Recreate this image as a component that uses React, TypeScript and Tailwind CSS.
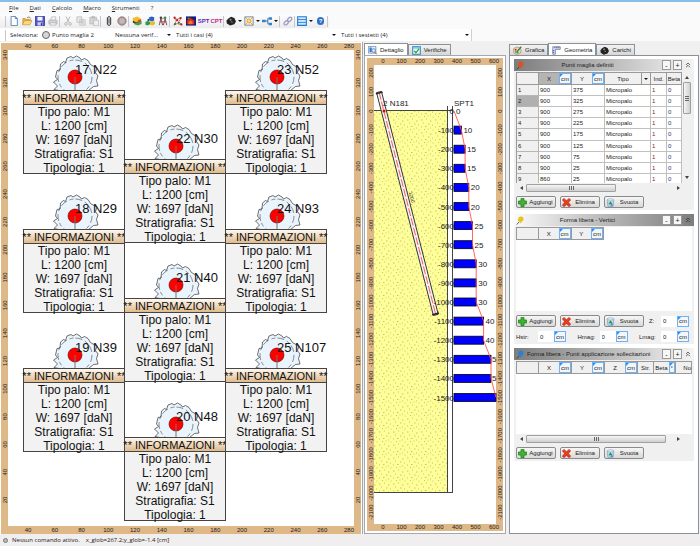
import { useState, type ReactNode } from "react";
import clsx from "clsx";
import { ChevronsUp } from "lucide-react";

type Pile = { label: string; x: number; y: number };

// x, y: top left corner of the information box
const PILES: Pile[] = [
  { label: "17 N22", x: 24, y: 91 },
  { label: "18 N29", x: 24, y: 230 },
  { label: "19 N39", x: 24, y: 369 },
  { label: "22 N30", x: 125, y: 160 },
  { label: "21 N40", x: 125, y: 299 },
  { label: "20 N48", x: 125, y: 438 },
  { label: "23 N52", x: 226, y: 91 },
  { label: "24 N93", x: 226, y: 230 },
  { label: "25 N107", x: 226, y: 369 },
];

const PILE_INFO = ["Tipo palo: M1", "L: 1200 [cm]", "W: 1697 [daN]", "Stratigrafia: S1", "Tipologia: 1"];

const SPT = [0, 10, 15, 15, 20, 20, 25, 25, 30, 30, 30, 40, 40, 50, 50, 60];

const POINTS = [
  [900, 375],
  [900, 325],
  [900, 275],
  [900, 225],
  [900, 175],
  [900, 125],
  [900, 75],
  [900, 25],
  [860, 25],
];

const MENU = ["File", "Dati", "Calcolo", "Macro", "Strumenti", "?"];

const BLOB =
  "M-14 14 L-21 12.5 L-17.5 9 L-21.5 5 L-17.5 2.5 L-19.5 0 L-18 -6.5 L-15 -7 L-14.5 -13 L-11.5 -15.5 L-9.5 -14.5 L-8 -19 L-4 -20.5 L-2 -19 L1.5 -21 L5 -19 L6.5 -17 L9.5 -18.5 L13 -16.5 L15.5 -12.5 L18 -11 L22 -9 L20.5 -4.5 L23 -1 L21.5 3.5 L23 9 L18.5 9.5 L13 14 Z";

function range(from: number, to: number, step: number) {
  const out: number[] = [];
  for (let v = from; step > 0 ? v <= to : v >= to; v += step) out.push(v);
  return out;
}

function Svg({ children, className = "size-[10px]" }: { children: ReactNode; className?: string }) {
  return (
    <svg viewBox="0 0 12 12" className={clsx("shrink-0", className)} aria-hidden="true">
      {children}
    </svg>
  );
}

const icons = {
  nuovo: <path d="M2.5 .5h5l2.5 2.5v8.500h-7.500zM7.500 .5v2.500h2.500" fill="#fff" stroke="#4a77a8" />,
  apri: (
    <>
      <path d="M1 10V3h3l1 1h5v2" fill="#e9b44c" stroke="#b07b1c" strokeWidth=".6" />
      <path d="M0.500 10.500L3 5.500h9l-2.500 5z" fill="#ffd978" stroke="#b07b1c" strokeWidth=".6" />
      <path d="M6 2q3-2.500 4.500 1" fill="none" stroke="#555" strokeWidth=".8" />
    </>
  ),
  salva: (
    <>
      <path d="M.500 .500h11v11h-11z" fill="#5558c8" stroke="#2f3296" />
      <path d="M3 1h6v4.500H3z" fill="#f4f6ff" />
      <path d="M3 7.500h6v4H3z" fill="#c9cdf3" />
      <path d="M7 8.500h1.500v3H7z" fill="#2f3296" />
    </>
  ),
  stampa: (
    <>
      <path d="M3 5l1.500-4h5L9 5z" fill="#f4f4f4" stroke="#aaa" strokeWidth=".7" />
      <path d="M1 5h10v4.500H1z" fill="#d4d4d4" stroke="#aaa" strokeWidth=".7" />
      <path d="M2.500 8h7v3h-7z" fill="#eee" stroke="#aaa" strokeWidth=".7" />
    </>
  ),
  taglia: (
    <g fill="none" stroke="#b0b0b0">
      <path d="M3.500 .500L7.500 8M8.500 .500L4.500 8" />
      <circle cx="3.500" cy="9.500" r="1.600" />
      <circle cx="8.500" cy="9.500" r="1.600" />
    </g>
  ),
  copia: (
    <g fill="#e8e8e8" stroke="#b5b5b5" strokeWidth=".8">
      <path d="M1 1h6v6.500H1zM4.500 4.500h6.500v6.500H4.500z" />
      <path d="M6 6.500h3.500M6 8.500h3.500" />
    </g>
  ),
  incolla: (
    <g fill="#d5d5d5" stroke="#b0b0b0" strokeWidth=".8">
      <path d="M1 1.500h8v8H1zM3.500 .500h3v2h-3z" />
      <path d="M5.500 5h6v6.500h-6z" fill="#f0f0f0" />
    </g>
  ),
  palo: (
    <>
      <path d="M4 2q2-3 4 0v8q-2 3-4 0z" fill="#d8d8d8" stroke="#222" strokeWidth="1.100" />
      <path d="M6 3v6" stroke="#444" />
    </>
  ),
  sezione: (
    <>
      <circle cx="6" cy="6" r="5" fill="#aaa" stroke="#777" />
      <circle cx="6" cy="6" r="3.900" fill="#bbb" stroke="#d25050" strokeDasharray="1.500 1.200" />
    </>
  ),
  strati: (
    <>
      <path d="M1 2.500l5-2 4 2v3l-5 2-4-2z" fill="#f4bd2a" />
      <path d="M1 5.500l4 2 5-2v2.500l-5 2-4-2z" fill="#5c3c25" />
      <path d="M5 8l6.500-2v3.500L7 11.500 2 9.500z" fill="#3fa546" />
      <path d="M7 5l4-1.500v3L7 8z" fill="#d84c2c" />
    </>
  ),
  cubi: (
    <>
      <path d="M5 1.500l3-1 3 1v4l-3 1-3-1z" fill="#2d61c9" />
      <path d="M.500 7l3-1 2.500 1v3l-3 1.500-2.500-1z" fill="#2f9b46" />
      <path d="M6 7l3-1 3 1v3l-3 1.500-3-1z" fill="#e3c228" />
      <path d="M3 4l2-1v3H3z" fill="#184b9e" />
    </>
  ),
  verifica: (
    <>
      <path d="M1.500 11L3.500 3l2 8M6.500 11l2-8 2 8" fill="none" stroke="#333" strokeWidth=".9" />
      <path d="M2 7h8" stroke="#d22" />
      <circle cx="3.500" cy="2" r="1.500" fill="#444" />
      <circle cx="8.500" cy="2" r="1.500" fill="#2a8c4a" />
      <path d="M5 4l2-2M5 10h2" stroke="#c22" />
    </>
  ),
  nodi: (
    <>
      <path d="M1 2l4 2 5-2-3 5 4 4-6-2-4 2 3-5z" fill="none" stroke="#a33" strokeWidth=".8" />
      <g fill="#c31c1c">
        <circle cx="2" cy="2" r="1.300" />
        <circle cx="9" cy="2.500" r="1.300" />
        <circle cx="5" cy="5" r="1.300" />
        <circle cx="10" cy="10" r="1.300" />
      </g>
      <g fill="#2d7a2d">
        <circle cx="2.500" cy="9.500" r="1.200" />
        <circle cx="7" cy="8" r="1.200" />
      </g>
    </>
  ),
  mappa: (
    <>
      <path d="M0 .500h12v11H0z" fill="#141b7c" />
      <path d="M1 10V5l4-3 5 3v5z" fill="#d3281e" />
      <path d="M3 10V7l3-2 2 2v3z" fill="#f5761f" />
      <path d="M2 2h2v1.500H2z" fill="#37c23c" />
    </>
  ),
  carico: (
    <>
      <path d="M3 3l3-2 4 1.500 2 4-2 3.500-5 1.500L1 9 .500 5.500z" fill="#222" />
      <path d="M4 4l2-1 1 2-2 1z" fill="#888" />
      <path d="M6 7l2 .500" stroke="#999" />
    </>
  ),
  maglia: (
    <>
      <path d="M1 1h10v10H1z" fill="#fff4cf" stroke="#315fb8" strokeWidth=".8" />
      <circle cx="6" cy="6" r="2.500" fill="#ffd98a" stroke="#d38310" strokeWidth=".8" />
      <path d="M1 1l3 3M11 1L8 4M1 11l3-3M11 11L8 8" stroke="#e09a20" />
    </>
  ),
  albero: (
    <>
      <path d="M4 6h3M7 3v6.500M7 3h1M7 9.500h1" stroke="#357" fill="none" />
      <path d="M0 4.500h4.500v3H0zM8 1.500h4v3H8zM8 8h4v3H8z" fill="#2e86d1" />
    </>
  ),
  catena: (
    <g fill="none" stroke="#9a9abf" strokeWidth="1.500">
      <ellipse cx="3.800" cy="8.200" rx="3" ry="1.900" transform="rotate(-45 3.800 8.200)" />
      <ellipse cx="8" cy="4" rx="3" ry="1.900" transform="rotate(-45 8 4)" />
    </g>
  ),
  tabella: (
    <>
      <path d="M.800 .800h10.400v10.400H.800z" fill="#cfe7fb" stroke="#1f78d1" strokeWidth="1.300" />
      <path d="M1 4.200h10M1 7.700h10" stroke="#1f78d1" />
    </>
  ),
  aggiungi: <path d="M4 .500h4V4h3.500v4H8v3.500H4V8H.500V4H4z" fill="#3db52f" stroke="#1b7d17" />,
  elimina: (
    <path
      d="M2.500 .500L6 3.500 9.500 .500 11.500 2.500 8.500 6l3 3.500-2 2L6 8.500l-3.500 3-2-2 3-3.500-3-3.500z"
      fill="#ee3d1f"
      stroke="#a51d0c"
      strokeWidth=".8"
    />
  ),
  svuota: (
    <>
      <path d="M1.500 2.500h9l-1.200 9H2.700z" fill="#bfdcf2" stroke="#6b92b5" strokeWidth=".8" />
      <ellipse cx="6" cy="2.500" rx="4.500" ry="1.400" fill="#eaf4fc" stroke="#6b92b5" strokeWidth=".7" />
      <path d="M4 8.500l2-3 2 3" fill="none" stroke="#249a37" strokeWidth="1.400" />
      <path d="M6 9.500h3" stroke="#1f5fc1" strokeWidth="1.400" />
    </>
  ),
  dettaglio: (
    <>
      <path d="M.500 .500h10v9H.500z" fill="#e7f0fa" stroke="#5a87bd" />
      <path d="M2 2h3v6H2z" fill="#3b74c4" />
      <circle cx="7.500" cy="6" r="2.500" fill="#cfe6fa" stroke="#3469a8" strokeWidth=".8" />
      <path d="M9 8l2.500 3" stroke="#c8742a" strokeWidth="1.500" />
    </>
  ),
  verifiche: (
    <>
      <path d="M.500 .500h11v11H.500z" fill="#7cc3ee" stroke="#2b7fbd" />
      <path d="M2 3.500h8V10H2z" fill="#e9f7e9" />
      <path d="M3 6.500l2.200 2.500L9.500 3.500" fill="none" stroke="#2fa135" strokeWidth="1.600" />
    </>
  ),
  grafica: (
    <>
      <path d="M6 1.500q5 0 5 4.500t-5 5-5.500-4.500 5.500-5z" fill="#e8d9b8" stroke="#87703c" strokeWidth=".7" />
      <circle cx="3.500" cy="5" r="1.300" fill="#d22" />
      <circle cx="6" cy="8.500" r="1.400" fill="#2a8" />
      <circle cx="3.700" cy="8" r="1" fill="#26c" />
      <path d="M5 8l6-7" stroke="#2f8a34" strokeWidth="1.600" />
    </>
  ),
  geometria: (
    <>
      <path d="M1 1h10v3.500H4.500V11H1z" fill="#dfe4f3" stroke="#44549a" strokeWidth=".8" />
      <path d="M4 1v2M6.500 1v2M9 1v2M1 6h2M1 8.500h2" stroke="#26367c" />
    </>
  ),
};

type IconName = keyof typeof icons;

const TOOLBAR: { icon?: IconName; text?: string; color?: string; label: string; drop?: boolean }[][] = [
  [
    { icon: "nuovo", label: "Nuovo" },
    { icon: "apri", label: "Apri" },
    { icon: "salva", label: "Salva" },
    { icon: "stampa", label: "Stampa" },
  ],
  [
    { icon: "taglia", label: "Taglia" },
    { icon: "copia", label: "Copia" },
    { icon: "incolla", label: "Incolla" },
  ],
  [
    { icon: "palo", label: "Palo" },
    { icon: "sezione", label: "Sezione" },
  ],
  [
    { icon: "strati", label: "Stratigrafia" },
    { icon: "cubi", label: "Materiali" },
    { icon: "verifica", label: "Verifica" },
  ],
  [
    { icon: "nodi", label: "Nodi" },
    { icon: "mappa", label: "Mappa" },
    { text: "SPT", color: "text-[#5a2bb8]", label: "Prova SPT" },
    { text: "CPT", color: "text-[#c42680]", label: "Prova CPT" },
  ],
  [
    { icon: "carico", label: "Carichi", drop: true },
    { icon: "maglia", label: "Maglia", drop: true },
    { icon: "albero", label: "Struttura", drop: true },
  ],
  [{ icon: "catena", label: "Collega" }],
  [
    { icon: "tabella", label: "Tabella", drop: true },
    { text: "?", color: "rounded-full bg-[#2f6fc4] px-[2px] text-white", label: "Guida" },
  ],
];

function Arrow() {
  return (
    <svg viewBox="0 0 4 2" className="h-[2px] w-1 shrink-0" aria-hidden="true">
      <path d="M0 0h4L2 2z" fill="#111" />
    </svg>
  );
}

function Separator() {
  return <span className="h-[11px] w-[2px] shrink-0 border-l border-[#c4c8ce]" />;
}

function Toolbar() {
  return (
    <div className="flex h-[14px] items-center self-start rounded-r bg-gradient-to-b from-[#fdfdfd] to-[#ececef] pl-[5px]">
      <Separator />
      {TOOLBAR.map((group, i) => (
        <div key={i} className="flex items-center">
          {i > 0 && <Separator />}
          {group.map(item => (
            <button
              key={item.label}
              type="button"
              aria-label={item.label}
              className={clsx("flex h-3 items-center", item.drop ? "w-[18px] gap-[2px] pl-px" : "w-[13px] justify-center")}
            >
              {item.icon && <Svg>{icons[item.icon]}</Svg>}
              {item.text && (
                <span className={clsx("font-['Liberation_Sans',sans-serif] text-[6px] leading-[8px] font-bold", item.color)}>
                  {item.text}
                </span>
              )}
              {item.drop && <Arrow />}
            </button>
          ))}
        </div>
      ))}
      <Separator />
    </div>
  );
}

function ComboBox({ label, value, className }: { label: string; value: string; className: string }) {
  return (
    <div className={clsx("relative flex items-center", className)}>
      <select
        aria-label={label}
        className="h-[11px] w-full appearance-none truncate bg-transparent pl-[3px] font-['Open_Sans',sans-serif] text-[6px] leading-[10px]"
      >
        <option>{value}</option>
      </select>
      <span className="pointer-events-none absolute right-[2px] flex">
        <Arrow />
      </span>
    </div>
  );
}

function SelectionBar() {
  return (
    <div className="flex h-3 w-[472px] max-w-full items-center border-r border-[#d0d0d4] bg-white pl-[5px]">
      <Separator />
      <span className="pl-[3px]">Seleziona:</span>
      <button type="button" className="ml-1 flex w-[70px] items-center gap-[2px]">
        <span className="size-2 rounded-full border border-[#666] bg-[#d6d6d6]" />
        Punto maglia 2
      </button>
      <ComboBox label="Verifica" value="Nessuna verif..." className="w-[61px]" />
      <ComboBox label="Casi di carico" value="Tutti i casi (4)" className="w-[165px]" />
      <ComboBox label="Sestetti" value="Tutti i sestetti (4)" className="min-w-0 flex-1" />
    </div>
  );
}

function PlanView() {
  const xTicks = range(40, 280, 20);
  const yTicks = range(340, 20, -20);
  const tickX = (v: number) => 28 + ((v - 40) * 321) / 240;
  const tickY = (v: number) => 500 - ((v - 20) * 445) / 320;

  return (
    <svg viewBox="1 43 360 491" className="h-full w-full" fontFamily="'Liberation Sans', Arial, sans-serif" textAnchor="middle">
      <defs>
        <linearGradient id="box-title" x2="0" y2="1">
          <stop offset="0" stopColor="#fffaf4" />
          <stop offset="1" stopColor="#deb887" />
        </linearGradient>
      </defs>
      <rect x="1" y="43" width="360" height="491" fill="#deb887" />
      <rect x="8" y="50" width="346" height="476" fill="#fff" />
      <g fontSize="6" fill="#222">
        {xTicks.map(v => (
          <g key={v}>
            <text x={tickX(v)} y="48">{v}</text>
            <text x={tickX(v)} y="532">{v}</text>
          </g>
        ))}
        {yTicks.map(v => (
          <g key={v}>
            <text transform={`translate(7 ${tickY(v)}) rotate(-90)`}>{v}</text>
            <text transform={`translate(360 ${tickY(v)}) rotate(-90)`}>{v}</text>
          </g>
        ))}
      </g>
      {PILES.map(p => (
        <g key={p.label} transform={`translate(${p.x} ${p.y})`}>
          <g transform="translate(51 -14)">
            <path d={BLOB} fill="#eaf4fd" stroke="#333" strokeWidth=".7" />
            <circle r="17" fill="none" stroke="#444" strokeWidth=".6" strokeDasharray="7 3 4 2" />
            <circle r="7" fill="#f00" stroke="#500" strokeWidth=".6" />
            <path d="M0 0V14" stroke="#777" />
          </g>
          <text x="51" y="-17" fontSize="13" textAnchor="start" fill="#111">{p.label}</text>
          <rect x="-.5" y="-.5" width="101" height="83" fill="#f2f2f2" stroke="#444" />
          <rect x="-.5" y="-.5" width="101" height="14" fill="url(#box-title)" stroke="#444" />
          <text x="50" y="11" fontSize="11" fill="#111">** INFORMAZIONI **</text>
          {PILE_INFO.map((line, i) => (
            <text key={line} x="50" y={25 + i * 14} fontSize="12" fill="#111">{line}</text>
          ))}
        </g>
      ))}
    </svg>
  );
}

function SectionView() {
  const tickX = (v: number) => 383 + (v * 111) / 600;
  const tickY = (v: number) => 110 - (v * 191) / 1000;
  const barEnd = (n: number) => Math.min(454 + n * 0.74, 496);

  return (
    <svg viewBox="367 57 136 473" className="h-full w-full" fontFamily="'Liberation Sans', Arial, sans-serif">
      <defs>
        <pattern id="soil" width="14" height="13" patternUnits="userSpaceOnUse">
          <rect width="14" height="13" fill="#ffff99" />
          <path
            d="M1 2h1.500M6 1h1M10 3h1.500M3 5h1M8 6h1.500M12 7h1M1 9h1M5 8.500h1.500M10 10h1M4 11.500h1M12.500 12h1M7.500 11h1"
            stroke="#b9b45c"
            strokeWidth=".8"
          />
        </pattern>
      </defs>
      <rect x="367" y="57" width="136" height="473" fill="#deb887" />
      <rect x="374" y="64" width="122" height="459" fill="#fff" />
      <g fontSize="6" fill="#222" textAnchor="middle">
        {range(0, 600, 100).map(v => (
          <g key={v}>
            <text x={tickX(v)} y="62">{v}</text>
            <text x={tickX(v)} y="528">{v}</text>
          </g>
        ))}
        {range(200, -2100, -100).map(v => (
          <g key={v}>
            <text transform={`translate(373 ${tickY(v)}) rotate(-90)`}>{v}</text>
            <text transform={`translate(502 ${tickY(v)}) rotate(-90)`}>{v}</text>
          </g>
        ))}
      </g>

      <rect x="374" y="110" width="74" height="382" fill="url(#soil)" />
      <path d="M374 109.500H453M447.500 105V492M452.500 105V492M374 491.500H453" fill="none" stroke="#444" />

      <g transform="translate(379 91) rotate(-14.3)">
        <rect x="-2.500" y="0" width="5" height="230" fill="#f4f4f4" stroke="#333" strokeWidth=".9" />
        <path d="M0 0V230" stroke="#f44" strokeWidth=".8" strokeDasharray="8 2" />
        <path d="M-3.500 1H3.500M-3.500 229H3.500" stroke="#222" strokeWidth="1.500" />
        <text transform="translate(4 110) rotate(90)" fontSize="5" textAnchor="middle" fill="#222">1200</text>
      </g>
      <circle cx="384" cy="110" r="1.500" fill="#d00" />

      <g fontSize="8" fill="#222">
        <text x="383" y="105">2 N181</text>
        <text x="454" y="105">SPT1</text>
        {SPT.map((n, i) => {
          const y = tickY(-i * 100);
          return (
            <g key={i}>
              {i > 0 && <rect x="454" y={y - 4} width={barEnd(n) - 454} height="8" fill="#00f" stroke="#001" strokeWidth=".8" />}
              <text x="454" y={y + 3} textAnchor="end">{-i * 100 || 0}</text>
              {n < 50 && <text x={barEnd(n) + 2} y={y + 3}>{n}</text>}
              {n === 50 && <text x={barEnd(n) + 1} y={y + 3}>5</text>}
            </g>
          );
        })}
      </g>
      <polyline
        points={SPT.map((n, i) => `${barEnd(n)},${tickY(-i * 100)}`).join(" ")}
        fill="none"
        stroke="#f55"
        strokeWidth=".9"
      />
    </svg>
  );
}

function Tab({ icon, children, active }: { icon: IconName; children: ReactNode; active?: boolean }) {
  return (
    <button
      type="button"
      role="tab"
      aria-selected={!!active}
      className={clsx(
        "flex items-center gap-[3px] border border-b-0 border-[#8c9098] px-[3px] text-[6px]",
        active ? "-mb-px h-[13px] bg-white" : "h-[11px] bg-gradient-to-b from-[#f3f3f3] to-[#d6d6d6]"
      )}
    >
      <Svg className="size-[9px]">{icons[icon]}</Svg>
      {children}
    </button>
  );
}

function GroupHeader({ title, pin, shade, center }: { title: string; pin: string; shade: string; center?: boolean }) {
  const [open, setOpen] = useState(true);
  return (
    <header className={clsx("flex h-3 items-center gap-[2px] px-[2px]", shade)}>
      <Svg className="size-[9px]">
        <path d="M1 11.500L4 8" stroke="#333" />
        <circle cx="6.500" cy="4" r="3.500" fill={pin} />
        <path d="M3 5l4 4" stroke={pin} strokeWidth="2" />
      </Svg>
      <h2 className={clsx("flex-1 whitespace-nowrap", center && "pr-3 text-center")}>{title}</h2>
      {["-", "+"].map(sign => (
        <button key={sign} type="button" className="h-[10px] w-[9px] border border-[#999] bg-[#f6f6f6] text-[7px] leading-[7px]">
          {sign}
        </button>
      ))}
      <button type="button" aria-label="Comprimi" aria-expanded={open} onClick={() => setOpen(!open)}>
        <ChevronsUp className="size-2" />
      </button>
    </header>
  );
}

function Unit({ children = "cm" }: { children?: ReactNode }) {
  return (
    <span className="relative flex h-[11px] min-w-[5px] items-center justify-center border border-[#6fb1f5] bg-[#f3f6fa] px-px">
      <svg viewBox="0 0 3 3" className="absolute top-0 left-0 size-[3px]" aria-hidden="true">
        <path d="M0 0h3L0 3z" fill="#1e90ff" />
      </svg>
      {children}
    </span>
  );
}

function HeadCell({ label, unit, className, end }: { label: string; unit?: string; className?: string; end?: boolean }) {
  return (
    <th className={clsx("border-r border-b border-[#999] p-0 font-normal", className)}>
      <div className="flex h-[11px] items-center">
        <span className={clsx("flex-1", end ? "text-right" : "text-center")}>{label}</span>
        {unit && <Unit>{unit}</Unit>}
      </div>
    </th>
  );
}

function ActionButtons() {
  const actions: { icon: IconName; label: string }[] = [
    { icon: "aggiungi", label: "Aggiungi" },
    { icon: "elimina", label: "Elimina" },
    { icon: "svuota", label: "Svuota" },
  ];
  return (
    <div className="flex gap-1">
      {actions.map(a => (
        <button
          key={a.label}
          type="button"
          className="flex h-3 w-10 items-center rounded-[2px] border border-[#8a8a8a] bg-gradient-to-b from-[#f6f6f6] to-[#d9d9d9] pl-px"
        >
          <Svg className="size-[9px]">{icons[a.icon]}</Svg>
          <span className="flex-1 text-center">{a.label}</span>
        </button>
      ))}
    </div>
  );
}

function NumberField({ label }: { label: string }) {
  return (
    <label className="flex items-center justify-between">
      {label}
      <span className="flex">
        <input defaultValue="0" className="h-[11px] w-4 bg-white pl-[2px]" />
        <Unit />
      </span>
    </label>
  );
}

function HorizontalScroll({ thumb }: { thumb: string }) {
  return (
    <div className="flex h-[9px] items-center justify-between bg-[#f0f0f0] px-1" aria-hidden="true">
      <svg viewBox="0 0 3 4" className="h-1 w-[3px]"><path d="M3 0v4L0 2z" fill="#444" /></svg>
      <div className="flex flex-1 px-[3px]">
        <div className={clsx("flex h-2 items-center justify-center gap-px rounded-[1px] border border-[#a0a0a0] bg-gradient-to-b from-[#f5f5f5] to-[#cfcfcf]", thumb)}>
          <i className="h-1 w-px bg-[#666]" />
          <i className="h-1 w-px bg-[#666]" />
          <i className="h-1 w-px bg-[#666]" />
        </div>
      </div>
      <svg viewBox="0 0 3 4" className="mr-2 h-1 w-[3px]"><path d="M0 0v4l3-2z" fill="#444" /></svg>
    </div>
  );
}

function VerticalScroll() {
  return (
    <div className="flex w-[10px] flex-col items-center bg-[#f0f0f0] py-1" aria-hidden="true">
      <svg viewBox="0 0 4 3" className="h-[3px] w-1"><path d="M0 3h4L2 0z" fill="#444" /></svg>
      <div className="mt-[3px] flex h-8 w-2 flex-col items-center justify-center gap-px rounded-[1px] border border-[#a0a0a0] bg-gradient-to-r from-[#f5f5f5] to-[#cfcfcf]">
        <i className="h-px w-1 bg-[#666]" />
        <i className="h-px w-1 bg-[#666]" />
        <i className="h-px w-1 bg-[#666]" />
      </div>
      <svg viewBox="0 0 4 3" className="mt-auto h-[3px] w-1"><path d="M0 0h4L2 3z" fill="#444" /></svg>
    </div>
  );
}

function PointsTable() {
  return (
    <div className="flex h-[111px] overflow-hidden bg-white">
      <table className="h-[113px] flex-1 table-fixed border-separate border-spacing-0 border-t border-l border-[#999] text-left">
        <thead className="bg-[#f0f0f0]">
          <tr>
            <HeadCell label="" className="w-[22px]" />
            <HeadCell label="X" unit="cm" className="w-[33px] bg-[#b4b4b4]" />
            <HeadCell label="Y" unit="cm" className="w-[33px]" />
            <th className="w-[46px] border-r border-b border-[#999] p-0 font-normal">
              <div className="flex h-[11px] items-center">
                <span className="flex-1 text-center">Tipo</span>
                <button type="button" aria-label="Filtra tipo" className="flex h-[11px] w-[9px] items-center justify-center border-l border-[#999]">
                  <Arrow />
                </button>
              </div>
            </th>
            <HeadCell label="Ind." className="w-4" />
            <HeadCell label="Beta" />
          </tr>
        </thead>
        <tbody>
          {POINTS.map(([x, y], i) => (
            <tr key={i} className="[&>td]:border-r [&>td]:border-b [&>td]:border-[#c0c0c0] [&>td]:px-px [&>td]:py-0 [&>td]:leading-[8px]">
              <th className={clsx("border-r border-b border-[#b5b5b5] px-px py-0 leading-[8px] font-normal", i === 1 ? "bg-[#b0b0b0]" : "bg-[#f0f0f0]")}>
                {i + 1}
              </th>
              <td>{x}</td>
              <td>{y}</td>
              <td>Micropalo</td>
              <td className="text-[#8a1c1c]">1</td>
              <td className="text-[#1c3a7a]">0</td>
            </tr>
          ))}
        </tbody>
      </table>
      <VerticalScroll />
    </div>
  );
}

function GeometryPanel() {
  return (
    <div className="flex flex-1 flex-col gap-1 border border-[#8c9098] bg-white px-1 pt-[3px] leading-[8px]">
      <section className="bg-[#f0f0f0] pb-[2px]">
        <GroupHeader title="Punti maglia definiti" pin="#d9541e" shade="bg-gradient-to-r from-[#7d7d7d] to-[#f4f4f4]" center />
        <div className="flex flex-col px-[2px] pt-px">
          <PointsTable />
          <HorizontalScroll thumb="w-[90px]" />
          <div className="pt-1">
            <ActionButtons />
          </div>
        </div>
      </section>

      <section className="bg-[#f0f0f0] pb-[2px]">
        <GroupHeader title="Forma libera - Vertici" pin="#e5c21c" shade="bg-gradient-to-r from-[#fafafa] to-[#7d7d7d]" center />
        <div className="flex flex-col gap-1 px-[2px] pt-px">
          <div className="h-[84px] bg-white">
            <table className="w-[88px] table-fixed border-separate border-spacing-0 border-t border-l border-[#999]">
              <thead className="bg-[#f0f0f0]">
                <tr>
                  <HeadCell label="" className="w-[22px]" />
                  <HeadCell label="X" unit="cm" />
                  <HeadCell label="Y" unit="cm" />
                </tr>
              </thead>
            </table>
          </div>
          <div className="flex items-center justify-between pr-[3px]">
            <ActionButtons />
            <div className="w-10">
              <NumberField label="Z:" />
            </div>
          </div>
          <div className="flex justify-between pr-[3px] *:w-[50px]">
            <NumberField label="Hstr:" />
            <NumberField label="Hmag:" />
            <NumberField label="Lmag:" />
          </div>
        </div>
      </section>

      <section className="bg-[#f0f0f0] pb-[2px]">
        <GroupHeader
          title="Forma libera - Punti applicazione sollecitazioni"
          pin="#2d7fd0"
          shade="bg-gradient-to-r from-[#7d7d7d] to-[#f4f4f4]"
        />
        <div className="flex flex-col px-[2px] pt-px">
          <div className="h-[73px] bg-white">
            <table className="w-full table-fixed border-separate border-spacing-0 border-t border-l border-[#999]">
              <thead className="bg-[#f0f0f0]">
                <tr>
                  <HeadCell label="" className="w-[22px]" />
                  <HeadCell label="X" unit="cm" className="w-[33px]" />
                  <HeadCell label="Y" unit="cm" className="w-[33px]" />
                  <HeadCell label="Z" unit="cm" className="w-[33px]" />
                  <HeadCell label="Str." className="w-4" />
                  <HeadCell label="Beta" unit="°" className="w-[22px]" />
                  <HeadCell label="No" end />
                </tr>
              </thead>
            </table>
          </div>
          <HorizontalScroll thumb="w-[140px]" />
          <div className="pt-1">
            <ActionButtons />
          </div>
        </div>
      </section>
    </div>
  );
}

export default function App() {
  return (
    <div className="flex min-h-screen flex-col bg-[#f0f0f0] font-['Liberation_Sans',Arial,sans-serif] text-[6px] leading-[10px] text-[#222]">
      <header className="flex flex-col border-t-2 border-[#87c0ec] bg-[#fafafa] font-['Open_Sans',sans-serif]">
        <nav className="flex h-3 items-center gap-[11px] pl-[9px]">
          {MENU.map(item => (
            <button key={item} type="button" className="text-[6px] leading-[10px]">
              {item === "?" ? item : <><u>{item[0]}</u>{item.slice(1)}</>}
            </button>
          ))}
        </nav>
        <Toolbar />
        <div className="pt-px">
          <SelectionBar />
        </div>
      </header>

      <main className="grid flex-1 grid-cols-[minmax(0,1fr)_144px_193px] pt-px">
        <section className="flex flex-col border-r border-[#a5a8ae] bg-white pl-px">
          <div className="flex-1 overflow-hidden pt-px pr-px">
            <PlanView />
          </div>
        </section>

        <section className="flex flex-col px-px">
          <div role="tablist" className="flex h-[13px] items-end">
            <Tab icon="dettaglio" active>Dettaglio</Tab>
            <Tab icon="verifiche">Verifiche</Tab>
          </div>
          <div className="flex-1 border border-[#a5a8ae] bg-white p-[2px]">
            <SectionView />
          </div>
        </section>

        <section className="flex flex-col pr-px pl-[2px]">
          <div role="tablist" className="flex h-[13px] items-end">
            <Tab icon="grafica">Grafica</Tab>
            <Tab icon="geometria" active>Geometria</Tab>
            <Tab icon="carico">Carichi</Tab>
          </div>
          <GeometryPanel />
        </section>
      </main>

      <footer className="flex h-3 items-center gap-1 bg-[#f0eeee] pl-[3px] font-['Open_Sans',sans-serif]">
        <span className="size-[5px] rounded-full border border-[#777] bg-[#bbb]" />
        <span className="pr-[2px]">Nessun comando attivo.</span>
        <span>x_glob=267.2;y_glob=-1.4 [cm]</span>
      </footer>
    </div>
  );
}
